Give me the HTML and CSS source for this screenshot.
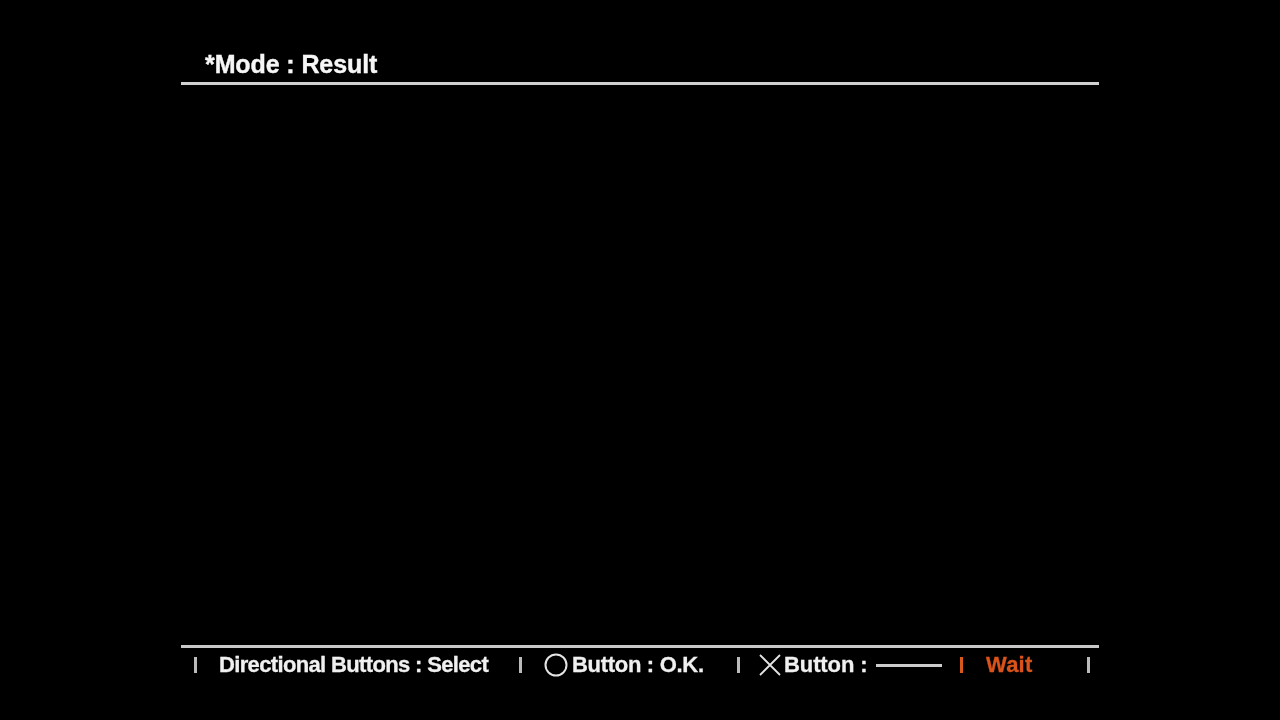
FILE: index.html
```html
<!DOCTYPE html>
<html lang="en">
<head>
<meta charset="utf-8">
<title>Mode : Result</title>
<link rel="stylesheet" href="styles.css">
</head>
<body>
<div class="screen">
  <header class="head">
    <h1 class="title">*Mode : Result</h1>
  </header>
  <main class="body"></main>
  <footer class="foot">
    <div class="cell cell-dir"><span class="label">Directional Buttons : Select</span></div>
    <div class="cell cell-ok">
      <svg class="icon-o" width="26" height="26" viewBox="0 0 26 26"><circle cx="13" cy="13" r="10.5" fill="none" stroke="#e4e4e4" stroke-width="2"/></svg>
      <span class="label">Button : O.K.</span>
    </div>
    <div class="cell cell-x">
      <svg class="icon-x" width="24" height="24" viewBox="0 0 24 24"><path d="M2 2 L22 22 M22 2 L2 22" fill="none" stroke="#e4e4e4" stroke-width="1.8"/></svg>
      <span class="label">Button :</span>
      <span class="dash"></span>
    </div>
    <div class="cell cell-wait"><span class="label wait">Wait</span></div>
    <div class="cell cell-end"></div>
  </footer>
</div>
</body>
</html>
```

FILE: styles.css
```css
html, body {
  margin: 0;
  padding: 0;
  background: #000;
}
.screen {
  width: 918px;
  height: 720px;
  margin: 0 auto;
  display: flex;
  flex-direction: column;
  font-family: "Liberation Sans", Arial, sans-serif;
  color: #eee;
  filter: blur(0.7px);
}
.head {
  height: 85px;
  border-bottom: 3px solid #d0d0d0;
  display: flex;
  align-items: flex-end;
  padding-left: 24px;
  box-sizing: border-box;
}
.title {
  margin: 0 0 3px;
  font-size: 25px;
  line-height: 30px;
  font-weight: 700;
  letter-spacing: -0.1px;
  color: #f6f6f6;
  -webkit-text-stroke: 0.4px #f6f6f6;
}
.body {
  flex: 1;
}
.foot {
  height: 75px;
  border-top: 3px solid #c8c8c8;
  padding-top: 4px;
  padding-left: 13px;
  box-sizing: border-box;
  display: flex;
  align-items: flex-start;
}
.cell {
  height: 26px;
  display: flex;
  align-items: center;
  position: relative;
  box-sizing: border-box;
}
.cell::before {
  content: "";
  position: absolute;
  left: 0;
  top: 5px;
  width: 3px;
  height: 16px;
  background: #bbb;
}
.label {
  font-size: 22px;
  line-height: 26px;
  font-weight: 700;
  white-space: nowrap;
  color: #f0f0f0;
  -webkit-text-stroke: 0.3px #f0f0f0;
}
.cell-dir { width: 325px; padding-left: 25px; }
.cell-dir .label { letter-spacing: -0.65px; }
.cell-ok { width: 218px; padding-left: 24px; }
.cell-ok .label { letter-spacing: -0.3px; }
.cell-x { width: 223px; padding-left: 21px; }
.cell-x .label { letter-spacing: -0.1px; }
.cell-wait { width: 127px; padding-left: 26px; }
.cell-wait::before { background: #d9581c; }
.cell-end { width: 3px; }
.label.wait { color: #d9531a; -webkit-text-stroke-color: #d9531a; letter-spacing: 0.2px; }
.icon-o { flex: none; margin-right: 3px; }
.icon-x { flex: none; margin-right: 2px; }
.dash {
  width: 66px;
  height: 3px;
  margin-left: 8px;
  background: #ccc;
}
```
